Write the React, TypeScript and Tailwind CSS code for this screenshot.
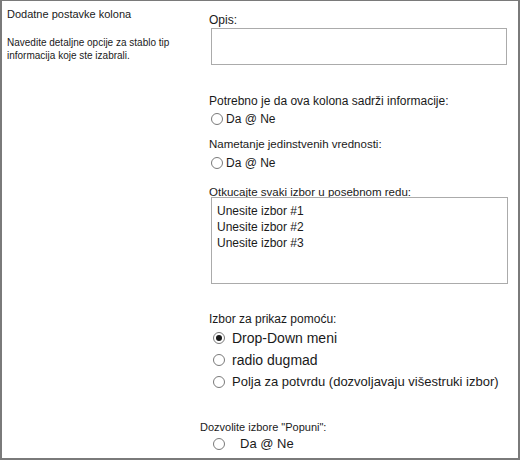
function Radio({ checked = false }: { checked?: boolean }) {
  return (
    <span className="w-[12px] h-[12px] rounded-full border border-[#7a7a7a] bg-white flex items-center justify-center shrink-0">
      {checked && <span className="w-[6px] h-[6px] rounded-full bg-[#1a1a1a]" />}
    </span>
  );
}

export default function App() {
  return (
    <div className="w-[520px] h-[460px] bg-white border-t border-l-2 border-r-2 border-b-2 border-[#7a7a7a] flex text-[#1a1a1a] font-['Liberation_Sans',Arial,sans-serif]">
      <div className="w-[207px] shrink-0 pl-[5px] pt-[5px]">
        <div className="text-[11px] leading-[16px]">Dodatne postavke kolona</div>
        <div className="mt-[14px] text-[10px] leading-[13px]">
          Navedite detaljne opcije za stablo tip
          <br />
          informacija koje ste izabrali.
        </div>
      </div>
      <div className="flex-1 flex flex-col pt-[11px] whitespace-nowrap">
        <div className="text-[12px] leading-[16px]">Opis:</div>
        <div className="ml-[2px] w-[296px] h-[37px] border border-[#ababab]" />

        <div className="mt-[28px] text-[12px] leading-[16px]">Potrebno je da ova kolona sadrži informacije:</div>
        <div className="mt-[2px] flex items-center h-[16px] ml-[2px] gap-[3px] text-[12px] leading-[16px]">
          <Radio />
          <span>Da @ Ne</span>
        </div>

        <div className="mt-[9px] text-[11.5px] leading-[16px]">Nametanje jedinstvenih vrednosti:</div>
        <div className="mt-[3px] flex items-center h-[16px] ml-[2px] gap-[3px] text-[12px] leading-[16px]">
          <Radio />
          <span>Da @ Ne</span>
        </div>

        <div className="mt-[15px] text-[11.5px] leading-[12px]">Otkucajte svaki izbor u posebnom redu:</div>
        <div className="mt-[-1px] ml-[2px] w-[297px] h-[87px] border border-[#ababab] pl-[5px] pt-[5px] text-[12px] leading-[16px]">
          <div>Unesite izbor #1</div>
          <div>Unesite izbor #2</div>
          <div>Unesite izbor #3</div>
        </div>

        <div className="mt-[27px] text-[12px] leading-[16px]">Izbor za prikaz pomoću:</div>
        <div className="mt-[1px] flex items-center h-[20px] ml-[4px] gap-[7px] text-[14px] leading-[20px]">
          <Radio checked />
          <span>Drop-Down meni</span>
        </div>
        <div className="mt-[2px] flex items-center h-[20px] ml-[4px] gap-[7px] text-[14px] leading-[20px]">
          <Radio />
          <span>radio dugmad</span>
        </div>
        <div className="mt-[2px] flex items-center h-[20px] ml-[4px] gap-[7px] text-[13px] leading-[20px]">
          <Radio />
          <span>Polja za potvrdu (dozvoljavaju višestruki izbor)</span>
        </div>

        <div className="mt-[27px] ml-[-9px] text-[11px] leading-[16px]">Dozvolite izbore "Popuni":</div>
        <div className="mt-[1px] flex items-center h-[16px] ml-[4px] gap-[15px] text-[13px] leading-[16px]">
          <Radio />
          <span>Da @ Ne</span>
        </div>
      </div>
    </div>
  );
}
